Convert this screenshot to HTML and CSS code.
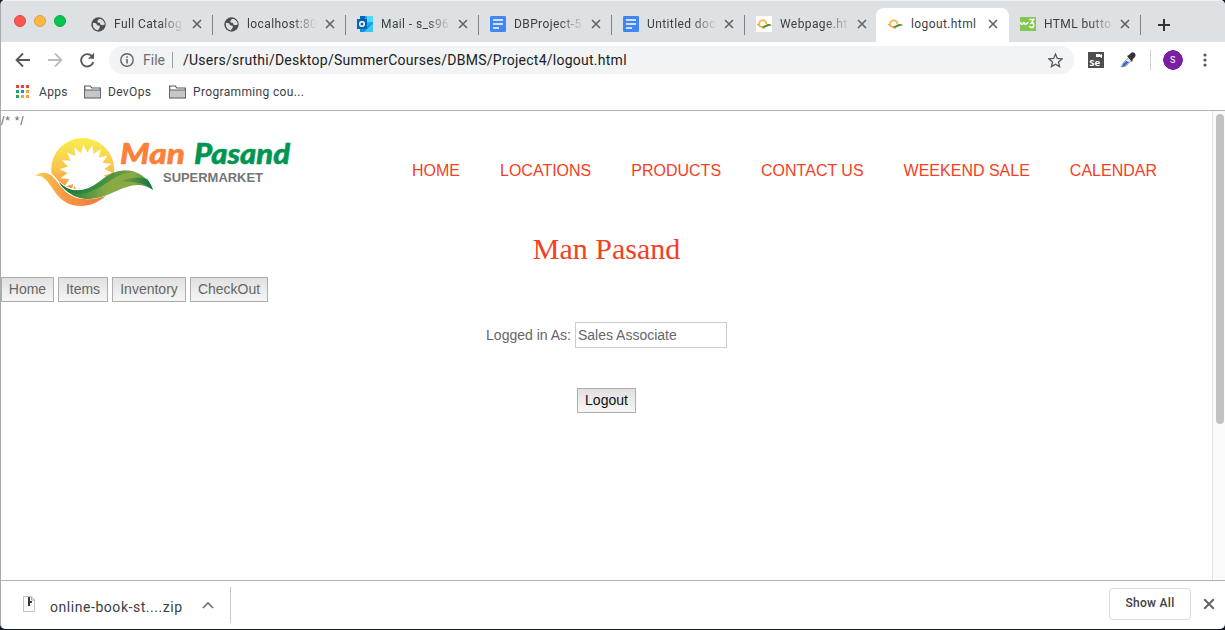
FILE: index.html
```html
<!DOCTYPE html>
<html lang="en">
<head>
<meta charset="utf-8">
<title>logout.html</title>
<link rel="stylesheet" href="styles.css">
</head>
<body>
<svg class="defs" width="0" height="0">
  <defs>
    <linearGradient id="sun" x1="0" y1="0" x2="0" y2="1"><stop offset="0" stop-color="#f8ee50"/><stop offset=".5" stop-color="#f9c34b"/><stop offset="1" stop-color="#f47838"/></linearGradient>
    <linearGradient id="wave" x1="0" y1="0" x2="1" y2="0"><stop offset="0" stop-color="#f9cf4b"/><stop offset=".4" stop-color="#f99a43"/><stop offset="1" stop-color="#f76f38"/></linearGradient>
    <linearGradient id="leaf" x1="0" y1="0" x2="1" y2="0"><stop offset="0" stop-color="#10783c"/><stop offset=".5" stop-color="#88a944"/><stop offset=".8" stop-color="#88a944"/><stop offset="1" stop-color="#3c8d40"/></linearGradient>
    <linearGradient id="leafdark" x1="0" y1="0" x2="1" y2="0"><stop offset="0" stop-color="#0d7a41"/><stop offset=".55" stop-color="#3d9040"/><stop offset=".8" stop-color="#5d9b42"/><stop offset="1" stop-color="#7da244"/></linearGradient>
    <linearGradient id="leaftip" x1="0" y1="0" x2="1" y2="0"><stop offset="0" stop-color="#88a944"/><stop offset="1" stop-color="#077442"/></linearGradient>
    <symbol id="close" viewBox="0 0 10 10"><path d="M1 1l8 8M9 1L1 9" stroke="#5f6368" stroke-width="1.6"/></symbol>
    <symbol id="globe" viewBox="0 0 24 24"><circle cx="12" cy="12" r="11.5" fill="#4b4e52"/><path d="M3 9l5 1 2 3 4 1v3l-3 4c-4 0-8-4-8-9zM13 3l-3 3 1 3h3l1 3 3 1 4-1c0-5-4-9-8-9z" fill="#dee1e4"/></symbol>
    <symbol id="doc" viewBox="0 0 16 16"><rect width="16" height="16" rx="1.2" fill="#4285f4"/><path d="M3 4h10M3 8h10M3 12h6" stroke="#fff" stroke-width="1.7"/></symbol>
    <symbol id="sunicon" viewBox="0 0 16 16"><path d="M3.800 10A3.600 3.600 0 1 1 10.300 8" fill="none" stroke="#f8bd54" stroke-width="2"/><path d="M1 8.300c3 0 3 4.500 8 3.600" fill="none" stroke="#f6a148" stroke-width="1.300"/><path d="M5 10c4 1 5-2.300 8-2 2 0 2 1 3 1.600-4 0-6 2.400-8 2.200z" fill="#528b3c"/></symbol>
    <symbol id="folder" viewBox="0 0 17 14"><path d="M.7 12.800V1h5.600l1.500 2h8.500v9.800z" fill="#fff" stroke="#55585c" stroke-width="1.200"/><path d="M1.300 5.300h14.400v7H1.300z" fill="#c5c6c8"/><path d="M1 5h15" stroke="#55585c"/></symbol>
  </defs>
</svg>
<div class="window">
  <div class="tabs">
    <div class="lights"><i class="red"></i><i class="amber"></i><i class="green"></i></div>
    <div class="tab"><svg class="fav"><use href="#globe"/></svg><span class="name fade">Full Catalog</span><svg class="x"><use href="#close"/></svg></div>
    <div class="tab"><svg class="fav"><use href="#globe"/></svg><span class="name fade">localhost:80</span><svg class="x"><use href="#close"/></svg></div>
    <div class="tab"><svg class="fav wide" viewBox="0 0 16 16"><path fill="#28a8ea" d="M3 0h13v10H3z"/><path fill="#50d9ff" d="M10 0h6v6h-6z"/><path fill="#0a65b5" d="M3 0h5v8H3z"/><path fill="#1490df" d="M3 8l6 3 7-5v10H3z"/><path fill="#39c8f3" d="M16 7v9H7z"/><path fill="#0364b8" d="M0 3h10v10H0z"/><circle cx="5" cy="8" r="2.300" fill="none" stroke="#fff" stroke-width="1.500"/></svg><span class="name fade">Mail - s_s96</span><svg class="x"><use href="#close"/></svg></div>
    <div class="tab"><svg class="fav wide"><use href="#doc"/></svg><span class="name fade">DBProject-5</span><svg class="x"><use href="#close"/></svg></div>
    <div class="tab"><svg class="fav wide"><use href="#doc"/></svg><span class="name fade">Untitled doc</span><svg class="x"><use href="#close"/></svg></div>
    <div class="tab last"><svg class="fav wide white"><use href="#sunicon"/></svg><span class="name fade">Webpage.ht</span><svg class="x"><use href="#close"/></svg></div>
    <div class="tab active"><svg class="fav wide"><use href="#sunicon"/></svg><span class="name">logout.html</span><svg class="x"><use href="#close"/></svg></div>
    <div class="tab end"><svg class="fav wide" viewBox="0 0 16 16"><path fill="#85c652" d="M0 1h16v14H0z"/><path d="M.5 6c.3 3 3 3 3.500 0 .3 3 3 3 4 0M9.500 3.500h4L11.500 7c3-1 3 4.500 0 4.500-1 0-1.800-.5-2-1.500" fill="none" stroke="#fff" stroke-width="1.600"/></svg><span class="name fade">HTML butto</span><svg class="x"><use href="#close"/></svg></div>
    <svg class="plus" viewBox="0 0 12 12"><path d="M6 0v12M0 6h12" stroke="#303338" stroke-width="2"/></svg>
  </div>
  <div class="toolbar">
    <svg class="nav" viewBox="0 0 16 16"><path d="M15 8H2M8 1.500L1.500 8 8 14.500" fill="none" stroke="#55585d" stroke-width="1.800"/></svg>
    <svg class="nav" viewBox="0 0 16 16"><path d="M1 8h13M8 1.500L14.500 8 8 14.500" fill="none" stroke="#babcbe" stroke-width="1.800"/></svg>
    <svg class="nav" viewBox="0 0 16 16"><path d="M13 4.200A6.200 6.200 0 1 0 14.300 10" fill="none" stroke="#55585d" stroke-width="1.900"/><path d="M15 .8v6H9z" fill="#55585d"/></svg>
    <div class="address">
      <svg class="info" viewBox="0 0 14 14"><circle cx="7" cy="7" r="6.200" fill="none" stroke="#5f6368" stroke-width="1.400"/><path d="M7 6v4.500M7 3.200v1.600" stroke="#5f6368" stroke-width="1.600"/></svg>
      <span class="scheme">File</span>
      <span class="url">/Users/sruthi/Desktop/SummerCourses/DBMS/Project4/logout.html</span>
      <svg class="star" viewBox="0 0 14 14"><path d="M7 1l1.700 4.100 4.400.4-3.300 2.900 1 4.300L7 10.400l-3.800 2.300 1-4.300L.9 5.500l4.400-.4z" fill="none" stroke="#55585d" stroke-width="1.200"/></svg>
    </div>
    <svg class="ext" viewBox="0 0 16 16"><path fill="#4e4e4e" d="M0 0h16v16H0z"/><path fill="#fff" d="M8 2h4v1l2-1v4l-2-1H8z"/><text x="1.200" y="14" class="se">Se</text></svg>
    <svg class="ext dropper" viewBox="0 0 16 16"><path d="M1 15l2-4 6-6 3 3-6 6z" fill="#e1e7f2" stroke="#84888e" stroke-width=".7"/><path d="M3 12l3-3 3 1-4 4-3 1z" fill="#3865d5"/><path d="M7 4l2-1 2-2c2-2 6 1 4 4l-2 2-1 3z" fill="#353537"/></svg>
    <div class="avatar">S</div>
    <svg class="more" viewBox="0 0 4 14"><g fill="#55585d"><circle cx="2" cy="2" r="1.600"/><circle cx="2" cy="7" r="1.600"/><circle cx="2" cy="12" r="1.600"/></g></svg>
  </div>
  <div class="bookmarks">
    <svg class="apps" viewBox="0 0 13 13"><path fill="#e8453c" d="M0 0h3v3H0zM5 0h3v3H5zM10 0h3v3h-3z"/><path fill="#22a565" d="M0 5h3v3H0zM0 10h3v3H0z"/><path fill="#1f87e8" d="M5 5h3v3H5z"/><path fill="#f2a43a" d="M10 5h3v3h-3zM5 10h3v3H5zM10 10h3v3h-3z"/></svg><span class="b-apps">Apps</span>
    <svg class="folder"><use href="#folder"/></svg><span class="b-dev">DevOps</span>
    <svg class="folder"><use href="#folder"/></svg><span class="b-prog">Programming cou...</span>
  </div>
  <div class="viewport">
    <main class="page">
      <div class="stray">/* */</div>
      <header class="masthead">
        <svg class="logo" viewBox="34 132 262 78">
          <circle cx="83.700" cy="169.500" r="31.500" fill="url(#sun)"/>
          <path fill="#fff" d="M84.200 144.600L88.300 152.500 93.400 145.300 94.500 154.100 101.800 149 99.900 157.700 108.400 155.400 103.600 162.900 112.500 163.700 105.400 169.100 113.400 172.800 105 175.500 116 190 90 203 80 188 79 193 75.500 186 72.200 193 74.100 184.300 65.600 186.600 70.400 179.100 61.500 178.300 68.600 172.900 60.600 169.200 69 166.500 62.800 160.200 71.700 160.700 67.900 152.600 76.100 156 75.400 147.200 81.900 153.200z"/>
          <path fill="#fff" d="M50 171c4 3 8 9 12 12 14 11 32 6 44-4 5-4 9-7 18-8v22l-34 10-22-7-18-20z"/>
          <path fill="url(#wave)" d="M36 176c5-4 12-5 18 1 9 10 14 21 31 22 9 1 15-1 22-3-8 6-15 10-25 10-23 0-27-19-36-27-3-3-6-4-10-3z"/>
          <path fill="url(#leaf)" d="M60 182c8 8 14 9 22 8 14-1 23-15 35-18 19-5 31 4 37 18-8-6-18-6-26-3-11 3-21 11-37 12-16 1-27-10-31-17z"/>
          <path fill="url(#leafdark)" d="M60 182c8 8 14 9 22 8 14-1 23-15 35-18 8-2 14-1 19 0-20 1-28 13-41 18-16 8-29 3-35-8z"/>
          <path fill="url(#leaftip)" d="M120 182c10-5 21-5 28-3 3 3 4 6 6 11-9-8-20-9-34-8z"/>
          <g class="script"><text x="121" y="163.500" textLength="65" lengthAdjust="spacingAndGlyphs" fill="#fc803a" stroke="#fc803a">Man</text><text x="195" y="163.500" textLength="96" lengthAdjust="spacingAndGlyphs" fill="#009550" stroke="#009550">Pasand</text></g>
          <text class="super" x="164" y="182" textLength="100" lengthAdjust="spacingAndGlyphs">SUPERMARKET</text>
        </svg>
        <nav class="menu"><a>HOME</a><a>LOCATIONS</a><a>PRODUCTS</a><a>CONTACT US</a><a>WEEKEND SALE</a><a>CALENDAR</a></nav>
      </header>
      <h1>Man Pasand</h1>
      <div class="actions"><button class="w1">Home</button><button class="w2">Items</button><button class="w3">Inventory</button><button class="w4">CheckOut</button></div>
      <div class="login"><label for="role">Logged in As:</label><input id="role" value="Sales Associate"></div>
      <div class="out"><button class="logout">Logout</button></div>
    </main>
    <div class="scroll"><i></i></div>
  </div>
  <footer class="downloads">
    <svg class="zip" viewBox="0 0 12 16"><path d="M.5.500h8L11.500 4v11.500H.5z" fill="#fafafa" stroke="#c2c2c2"/><path d="M5 1h2v9H5zM7 5h2v2H7z" fill="#37393c"/><path d="M8.500.500V4h3" fill="none" stroke="#aaa"/></svg>
    <span class="file">online-book-st....zip</span>
    <svg class="chev" viewBox="0 0 12 8"><path d="M1 7l5-5 5 5" fill="none" stroke="#6b6e72" stroke-width="1.600"/></svg>
    <i class="rule"></i>
    <button class="showall">Show All</button>
    <svg class="dx"><use href="#close"/></svg>
  </footer>
</div>
</body>
</html>
```
FILE: styles.css
```css
* { box-sizing: border-box; }
body { margin: 0; background: #141a2a; font-family: Roboto, "Liberation Sans", sans-serif; color: #3c4043; }
svg { display: block; flex: none; }
.defs { position: absolute; }
.window { width: 1225px; height: 629px; display: flex; flex-direction: column; background: #fff; border-left: 1px solid #aaa; border-radius: 5px; overflow: hidden; }
.tabs { height: 42px; flex: none; background: #dee1e4; border-top: 1px solid #edf1f2; display: flex; }
.lights { width: 79px; flex: none; display: flex; gap: 8px; padding: 14px 0 0 13px; }
.lights i { width: 12px; height: 12px; border-radius: 50%; }
.red { background: #fc5753; border: 1px solid #e34643; }
.amber { background: #fdb842; border: 1px solid #dfa032; }
.green { background: #05c74f; border: 1px solid #05ad43; }
.tab { width: 133px; flex: none; height: 34px; margin-top: 7px; padding: 0 11px 2px; display: flex; align-items: center; background: linear-gradient(#7e8286, #7e8286) right 0 top 7px / 1px 20px no-repeat; }
.tab.last { width: 131px; padding-right: 9px; background: none; border-radius: 0 0 8px 0; }
.tab.active { background: #fff; border-radius: 8px 8px 0 0; }
.tab.end { width: 132px; }
.fav { width: 15px; height: 15px; margin-right: 8px; }
.wide { width: 16px; height: 16px; margin-right: 8px; }
.white { background: #fff; }
.name { width: 70px; white-space: nowrap; font-size: 12px; letter-spacing: .4px; }
.fade { mask-image: linear-gradient(90deg, #000 65%, transparent); }
.x { width: 10px; height: 10px; margin-left: auto; }
.plus { width: 12px; height: 12px; margin: 18px 0 0 17px; }
.toolbar { height: 36px; flex: none; display: flex; align-items: center; padding-left: 14px; }
.nav { width: 16px; height: 16px; margin-right: 16px; }
.address { width: 965px; height: 28px; margin-left: -2px; border-radius: 14px; background: #f1f3f4; display: flex; align-items: center; padding: 0 11px; }
.info { width: 14px; height: 14px; }
.scheme { width: 30px; margin-left: 9px; color: #6b6e72; border-right: 1px solid #9b9da0; font-size: 14px; line-height: 16px; }
.url { margin-left: 10px; font-size: 14px; color: #202124; letter-spacing: .25px; white-space: nowrap; }
.star { width: 15px; height: 15px; margin-left: auto; }
.ext { width: 16px; height: 16px; margin-left: 14px; }
.se { font: bold 9.500px "Open Sans", sans-serif; fill: #fff; }
.dropper { margin-left: 16px; }
.avatar { width: 35px; height: 20px; margin-left: 14px; border-left: 1px solid #d0d2d4; background: radial-gradient(circle at 22px 10px, #7b1fa2 9.500px, transparent 10px); color: #fff; font-size: 9px; line-height: 20px; padding-left: 19px; }
.more { width: 4px; height: 14px; margin-left: 18px; }
.bookmarks { height: 32px; flex: none; display: flex; align-items: center; padding: 0 0 5px 15px; font-size: 12px; letter-spacing: .35px; white-space: nowrap; }
.apps { width: 13px; height: 13px; margin-right: 10px; }
.folder { width: 17px; height: 14px; margin-right: 7px; }
.b-apps { width: 45px; }
.b-dev { width: 61px; }
.viewport { height: 470px; flex: none; display: flex; border-top: 1px solid #b3b3b3; }
.page { width: 1211px; font-family: "Liberation Sans", Arial, sans-serif; color: #666; }
.stray { height: 20px; font-size: 12px; line-height: 20px; letter-spacing: .8px; }
.masthead { height: 81px; display: flex; }
.logo { width: 262px; height: 78px; margin: 1px 0 0 32px; }
.script { font: italic 900 28px Lato, sans-serif; stroke-width: .5px; }
.super { font: bold 13px "Liberation Sans", sans-serif; fill: #747474; }
.menu { display: flex; margin: 31px 0 0 117px; gap: 40px; font-size: 16px; line-height: 18px; color: #f4401f; white-space: nowrap; }
h1 { height: 46px; margin: 17px 0 0; text-align: center; font: 30px/40px "Liberation Serif", Times, serif; color: #f4401f; }
.actions { height: 25px; display: flex; gap: 4px; margin-top: 2px; }
button { font: 14px/16px "Liberation Sans", Arial, sans-serif; padding: 0 0 2px; border: 1px solid #adadad; border-radius: 0; background: linear-gradient(#e0e0e0, #f6f6f6); color: #666; height: 25px; }
.w1 { width: 53px; }
.w2 { width: 50px; }
.w3 { width: 74px; }
.w4 { width: 78px; }
.login { height: 26px; margin-top: 20px; display: flex; justify-content: center; align-items: center; gap: 4px; font-size: 14px; }
.login input { width: 152px; height: 26px; padding: 0 2px; border: 1px solid #ccc; font: 14px "Liberation Sans", Arial, sans-serif; color: #666; }
.out { display: flex; justify-content: center; margin-top: 40px; }
.logout { width: 59px; color: #111; }
.scroll { width: 13px; background: #fafafa; border-left: 1px solid #e4e4e4; padding: 3px 0 0 3px; }
.scroll i { display: block; width: 8px; height: 310px; border-radius: 4px; background: #c2c2c2; }
.downloads { height: 49px; flex: none; display: flex; align-items: center; border-top: 1px solid #b3b3b3; padding: 0 10px 0 22px; }
.zip { width: 12px; height: 16px; margin-bottom: 2px; }
.file { width: 136px; margin: 4px 0 0 15px; font-size: 14px; letter-spacing: .55px; white-space: nowrap; }
.chev { width: 12px; height: 8px; margin-left: 16px; }
.rule { width: 1px; height: 36px; margin-left: 16px; background: #c8c8c8; }
.showall { width: 82px; height: 32px; margin: -2px 12px 0 auto; border: 1px solid #dadce0; border-radius: 4px; background: #fff; color: #3c4043; font: 500 12px Roboto, sans-serif; letter-spacing: .3px; }
.dx { width: 12px; height: 12px; margin-top: -2px; }
```
